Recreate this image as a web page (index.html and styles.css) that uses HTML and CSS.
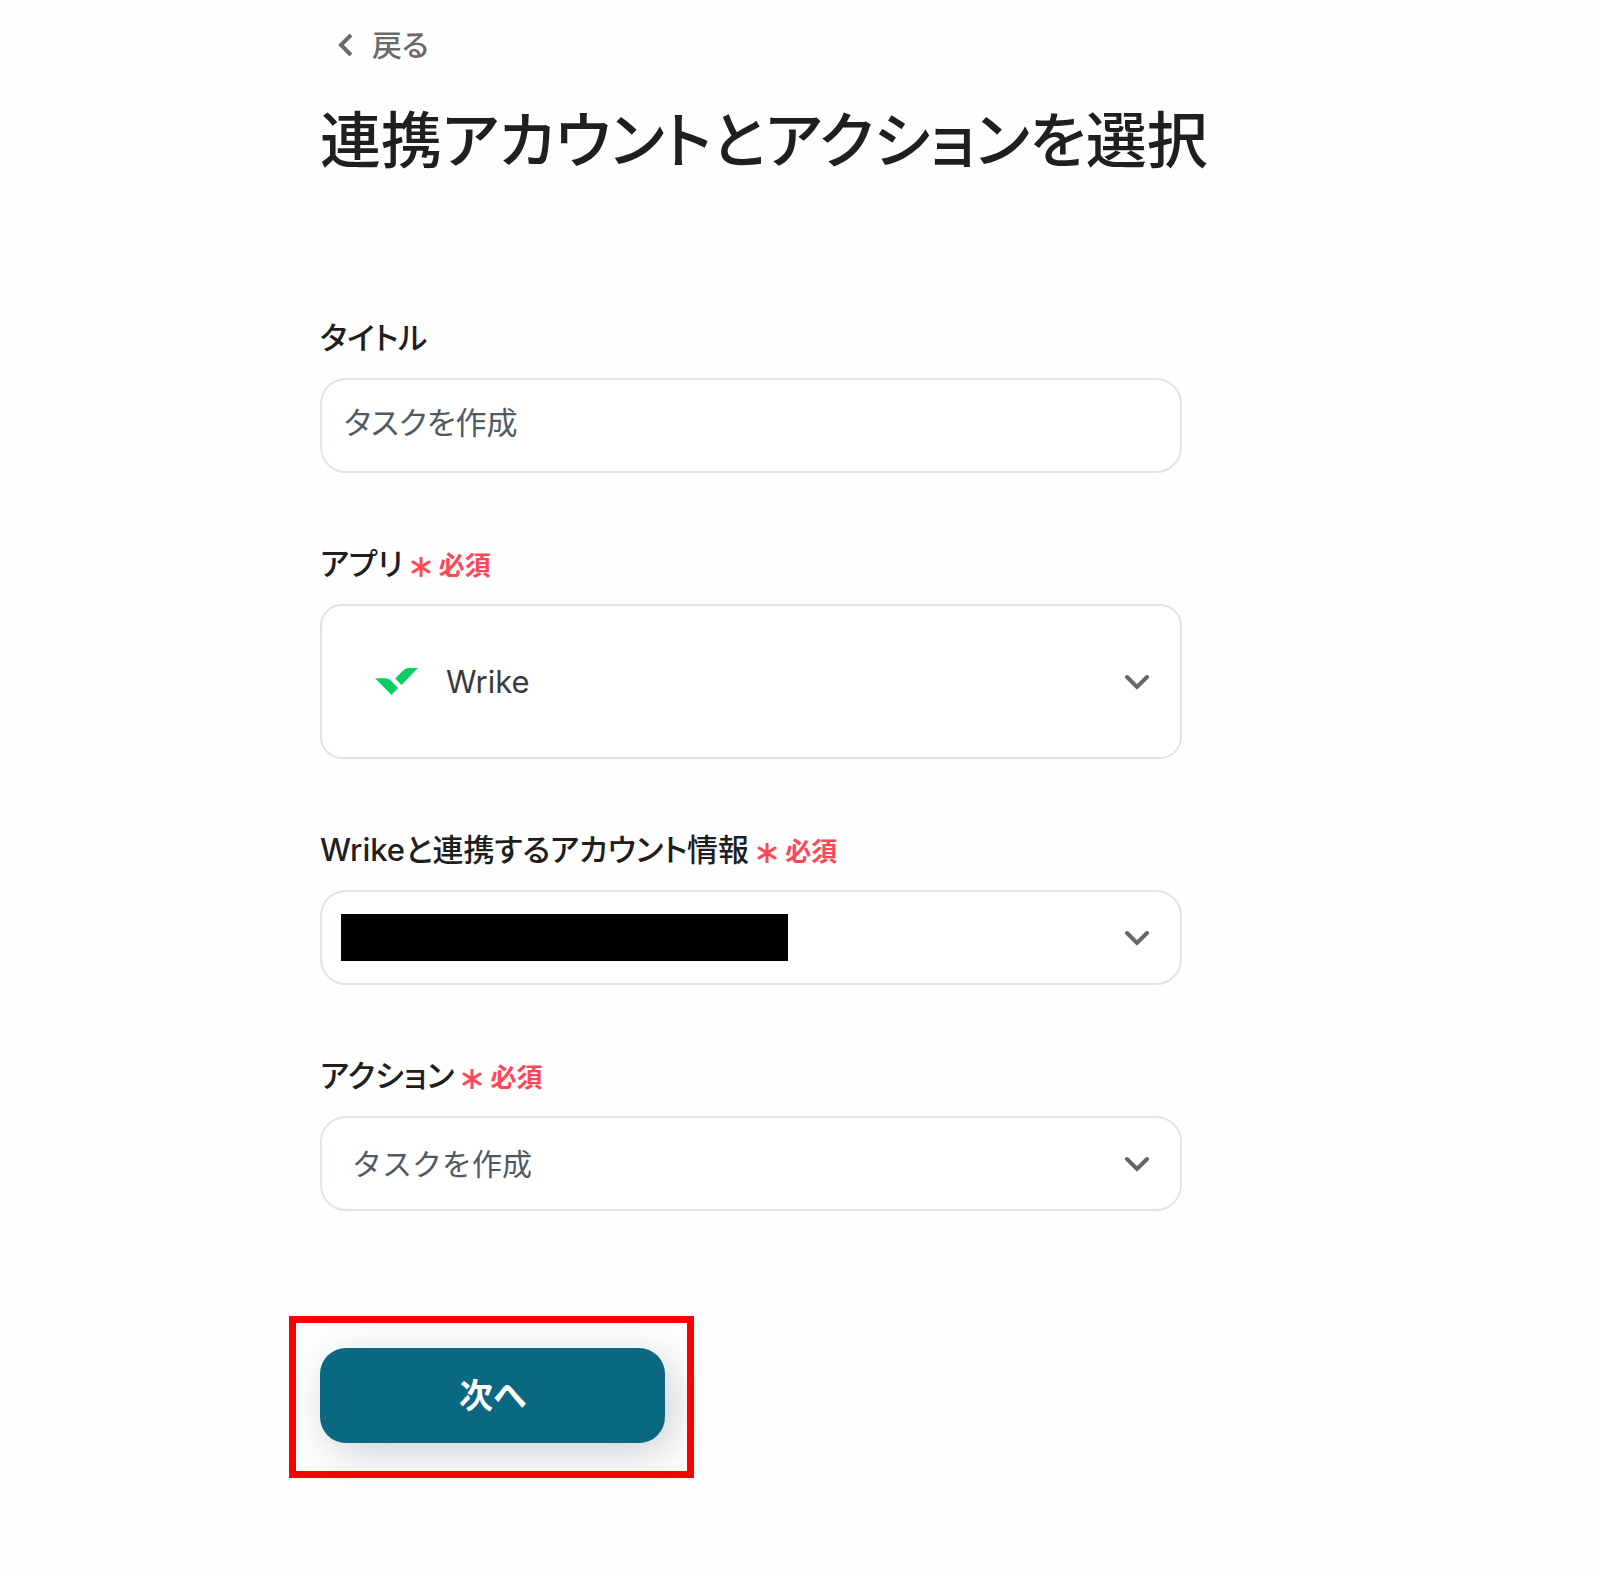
FILE: index.html
```html
<!DOCTYPE html>
<html lang="ja">
<head>
    <meta charset="UTF-8">
    <meta name="viewport" content="width=device-width, initial-scale=1.0">
    <title>連携アカウントとアクションを選択</title>
    <link rel="stylesheet" href="styles.css">
</head>
<body>
    <main class="page">
        <a class="back" href="#">
            <svg class="back-icon" viewBox="0 0 16 24" aria-hidden="true"><path d="M13 2 3 12l10 10"/></svg>
            戻る
        </a>
        <h1 class="heading">連携アカウントとアクションを選択</h1>
        <form class="form">
            <div class="field">
                <div class="label-row">
                    <label for="title">タイトル</label>
                </div>
                <input class="control control-title" id="title" type="text" value="タスクを作成">
            </div>
            <div class="field">
                <div class="label-row">
                    <label for="app">アプリ</label>
                    <span class="required">
                        <svg class="asterisk" viewBox="0 0 20 20" aria-hidden="true"><path d="M10 1v18M2 5l16 10M2 15 18 5"/></svg>
                        必須
                    </span>
                </div>
                <div class="select">
                    <select class="control control-app" id="app">
                        <option>Wrike</option>
                    </select>
                    <svg class="app-logo" viewBox="0 0 130 82" aria-hidden="true">
                        <path d="M0 31h33q7 0 12 5l25 25-20 21z"/>
                        <path d="M130 0H102q-9 0-15 6L61 32l19 20z"/>
                    </svg>
                    <svg class="chevron" viewBox="0 0 24 16" aria-hidden="true"><path d="m2 3 10 10L22 3"/></svg>
                </div>
            </div>
            <div class="field">
                <div class="label-row">
                    <label for="account">Wrikeと連携するアカウント情報</label>
                    <span class="required">
                        <svg class="asterisk" viewBox="0 0 20 20" aria-hidden="true"><path d="M10 1v18M2 5l16 10M2 15 18 5"/></svg>
                        必須
                    </span>
                </div>
                <div class="select">
                    <select class="control" id="account">
                        <option></option>
                    </select>
                    <span class="mask"></span>
                    <svg class="chevron" viewBox="0 0 24 16" aria-hidden="true"><path d="m2 3 10 10L22 3"/></svg>
                </div>
            </div>
            <div class="field">
                <div class="label-row">
                    <label for="action">アクション</label>
                    <span class="required">
                        <svg class="asterisk" viewBox="0 0 20 20" aria-hidden="true"><path d="M10 1v18M2 5l16 10M2 15 18 5"/></svg>
                        必須
                    </span>
                </div>
                <div class="select">
                    <select class="control control-action" id="action">
                        <option>タスクを作成</option>
                    </select>
                    <svg class="chevron" viewBox="0 0 24 16" aria-hidden="true"><path d="m2 3 10 10L22 3"/></svg>
                </div>
            </div>
            <div class="highlight">
                <button class="next" type="button">次へ</button>
            </div>
        </form>
    </main>
</body>
</html>
```
FILE: styles.css
```css
:root {
    --text: #1f1f1f;
    --muted: #6b6b6b;
    --value: #505a62;
    --border: #e1e4e8;
    --red: #ff4757;
    --teal: #0b6881;
}
* {
    box-sizing: border-box;
}
body {
    margin: 0;
    background-color: #fefefe;
    color: var(--text);
    font-family: Inter, "Noto Sans CJK JP", sans-serif;
    font-size: 31px;
    font-feature-settings: "palt";
}
.page {
    padding: 22px 20% 98px;
}
.back {
    display: inline-flex;
    align-items: center;
    gap: 18px;
    margin-left: 18px;
    color: var(--muted);
    font-size: 30px;
    font-weight: 500;
    line-height: 46px;
    text-decoration: none;
}
.back-icon {
    width: 16px;
    height: 24px;
    fill: none;
    stroke: var(--muted);
    stroke-width: 4;
}
.heading {
    margin: 28px 0 130px;
    font-size: 61px;
    font-weight: 500;
    line-height: 90px;
    white-space: nowrap;
}
.form {
    max-width: 862px;
}
.field {
    margin-bottom: 69px;
}
.label-row {
    display: flex;
    align-items: center;
    gap: 8px;
    margin-bottom: 18px;
    font-weight: 500;
    line-height: 44px;
}
.required {
    display: flex;
    align-items: center;
    gap: 8px;
    padding-top: 4px;
    color: var(--red);
    font-size: 26px;
    font-weight: 600;
    line-height: 40px;
}
.asterisk {
    width: 20px;
    height: 20px;
    margin-top: 2px;
    fill: none;
    stroke: var(--red);
    stroke-width: 3;
    stroke-linecap: round;
}
.control {
    width: 100%;
    height: 95px;
    padding: 0 22px;
    border: 2px solid var(--border);
    border-radius: 26px;
    background-color: white;
    color: var(--value);
    font: inherit;
    font-feature-settings: "palt";
    appearance: none;
}
.control-title {
    padding-bottom: 10px;
}
.select {
    display: grid;
    align-items: center;
}
.select > * {
    grid-area: 1 / 1;
}
.control-app {
    height: 155px;
    padding-left: 124px;
    border-color: #e2e2e2;
    border-radius: 22px;
    color: #3a3a3a;
}
.control-action {
    padding-left: 30px;
    font-size: 30px;
    font-feature-settings: normal;
}
.app-logo {
    width: 43px;
    height: 27px;
    margin-left: 55px;
    fill: #08cf65;
    pointer-events: none;
}
.chevron {
    justify-self: end;
    width: 24px;
    height: 16px;
    margin-right: 33px;
    fill: none;
    stroke: #666;
    stroke-width: 4;
    stroke-linecap: round;
    pointer-events: none;
}
.mask {
    width: 447px;
    height: 47px;
    margin-left: 21px;
    background-color: black;
}
.highlight {
    width: fit-content;
    margin: 105px 0 0 -31px;
    padding: 25px 22px 28px 24px;
    border: 7px solid red;
}
.next {
    display: block;
    width: 345px;
    height: 95px;
    padding-bottom: 6px;
    border: 0;
    border-radius: 26px;
    background-color: var(--teal);
    box-shadow: 8px 10px 40px rgba(30, 55, 75, 0.22);
    color: white;
    font: inherit;
    font-size: 34px;
    font-weight: 700;
}
```
